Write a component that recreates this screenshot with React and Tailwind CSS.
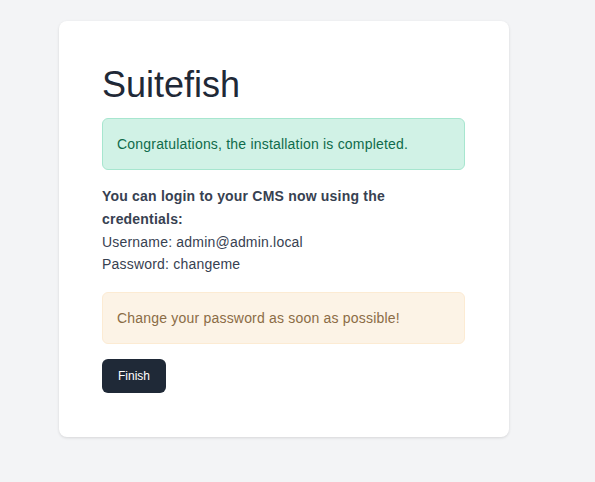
export default function App() {
  return (
    <div className="min-h-screen bg-[#f3f4f6] pt-[21px] font-['Liberation_Sans',Arial,sans-serif]">
      <div className="ml-[59px] w-[450px] rounded-lg bg-white pt-11 pb-11 pl-[43px] pr-[44px] shadow-[0_1px_3px_rgba(0,0,0,0.12)]">
        <h1 className="text-4xl leading-10 text-[#1f2937]">Suitefish</h1>

        <div className="mt-[13px] rounded-md border border-[#a7e6cf] bg-[#d1f2e6] px-[14px] py-[15px] text-sm leading-5 tracking-[0.2px] text-[#0f6b4b]">
          Congratulations, the installation is completed.
        </div>

        <div className="mt-[15px] text-sm leading-relaxed tracking-[0.2px] text-[#374151]">
          <p className="pr-[70px] font-bold">You can login to your CMS now using the credentials:</p>
          <p>Username: admin@admin.local</p>
          <p>Password: changeme</p>
        </div>

        <div className="mt-4 rounded-md border border-[#fcebd3] bg-[#fcf3e6] px-[14px] py-[15px] text-sm leading-5 tracking-[0.2px] text-[#8b6c45]">
          Change your password as soon as possible!
        </div>

        <button className="mt-[15px] rounded-md bg-[#1f2937] px-4 py-[9px] text-xs leading-4 text-white">
          Finish
        </button>
      </div>
    </div>
  )
}
